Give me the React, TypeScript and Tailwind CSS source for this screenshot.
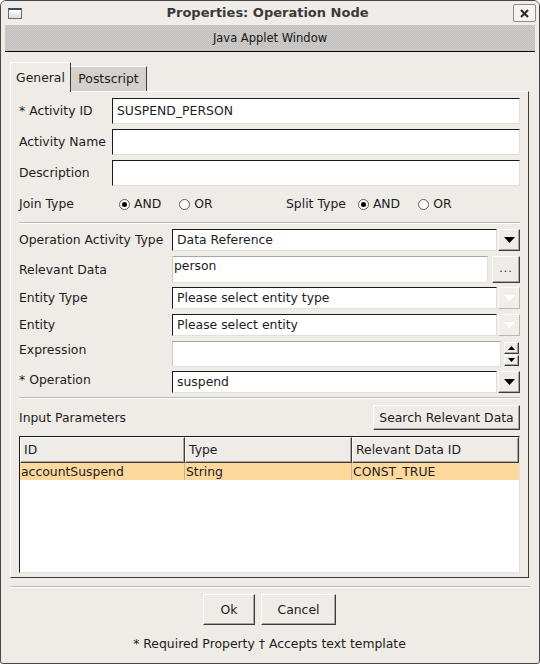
import React from 'react';

const bevel =
  'border border-t-white border-l-white border-r-[#3c3c3c] border-b-[#3c3c3c] shadow-[inset_-1px_-1px_0_#aaa6a1] bg-[#efebe7]';
const bevelOff =
  'border border-t-white border-l-white border-r-[#b9b5b0] border-b-[#b9b5b0] bg-[#f1eeea]';
const sunken =
  'border border-t-[#1a1a1a] border-l-[#1a1a1a] border-r-[#e2ded9] border-b-[#e2ded9] bg-white';
const soft =
  'border border-t-[#a9a5a0] border-l-[#cfcbc6] border-r-[#e2ded9] border-b-[#e2ded9] bg-white';

function DownArrow({ off }: { off?: boolean }) {
  return (
    <svg width="11" height="6" viewBox="0 0 11 6" aria-hidden>
      <polygon points="0,0 11,0 5.5,6" fill={off ? '#ffffff' : '#000000'} />
    </svg>
  );
}

function Label({ children, w }: { children: React.ReactNode; w: string }) {
  return <span className={`${w} shrink-0 whitespace-nowrap`}>{children}</span>;
}

function Combo({ value, off }: { value: string; off?: boolean }) {
  return (
    <div className="flex h-[22px] flex-1 gap-px">
      <div className={`${sunken} flex flex-1 items-center px-[4px]`}>{value}</div>
      <div className={`${off ? bevelOff : bevel} flex w-[22px] items-center justify-center`}>
        <DownArrow off={off} />
      </div>
    </div>
  );
}

function Radio({ on, label }: { on?: boolean; label: string }) {
  return (
    <span className="flex items-center gap-[4px]">
      <span className="flex size-[11px] items-center justify-center rounded-full border border-[#5e5e5e] bg-white">
        {on && <span className="size-[5px] rounded-full bg-black" />}
      </span>
      <span>{label}</span>
    </span>
  );
}

function Groove() {
  return <div className="h-[2px] border-t border-t-[#bdb9b4] border-b border-b-white" />;
}

function Spinner() {
  return (
    <div className="flex w-[15px] flex-col gap-px py-px">
      <div className={`${bevel} flex h-[12px] items-center justify-center`}>
        <svg width="7" height="4" viewBox="0 0 7 4" aria-hidden>
          <polygon points="0,4 7,4 3.5,0" fill="#000" />
        </svg>
      </div>
      <div className={`${bevel} flex h-[12px] items-center justify-center`}>
        <svg width="7" height="4" viewBox="0 0 7 4" aria-hidden>
          <polygon points="0,0 7,0 3.5,4" fill="#000" />
        </svg>
      </div>
    </div>
  );
}

export default function App() {
  return (
    <div className="flex h-[664px] w-[540px] flex-col overflow-hidden rounded-t-[6px] rounded-b-[3px] border border-[#474747] bg-[#efebe7] font-['DejaVu_Sans',sans-serif] text-[12.4px] leading-[16px] text-[#1c1c1c]">
      {/* title bar */}
      <div className="flex h-[24px] shrink-0 items-center bg-[#f0ede9] pl-[7px] pr-[3px]">
        <span className="h-[11px] w-[14px] border border-[#6a6a6a] border-t-2 border-t-[#3c4b66] bg-gradient-to-b from-white to-[#d9dde2]" />
        <span className="flex-1 text-center text-[13px] font-bold text-[#3a3a3a]">
          Properties: Operation Node
        </span>
        <span className="flex h-[18px] w-[23px] items-center justify-center rounded-[2px] border border-[#8c8c8c] bg-[#f6f4f1]">
          <svg width="9" height="9" viewBox="0 0 9 9" aria-hidden>
            <path d="M1 1 L8 8 M8 1 L1 8" stroke="#2e2e2e" strokeWidth="2.2" />
          </svg>
        </span>
      </div>

      {/* applet banner */}
      <div className="mx-[4px] flex h-[27px] shrink-0 items-center justify-center border-b border-black bg-[#c8c6c4] bg-[repeating-conic-gradient(#c1bfbd_0%_25%,#cfcdcb_0%_50%)] bg-[length:2px_2px] text-[11.5px] text-[#151515]">
        Java Applet Window
      </div>

      <div className="flex flex-1 flex-col pl-[9px] pr-[10px] pt-[10px]">
        {/* tabs */}
        <div className="flex h-[29px] items-end">
          <div className="relative z-10 -mb-px flex h-[30px] w-[61px] items-center justify-center border-l border-t border-l-white border-t-white border-r border-r-[#3c3c3c] bg-[#efebe7]">
            General
          </div>
          <div className="flex h-[25px] w-[76px] items-center justify-center border-t border-t-white border-r border-r-[#3c3c3c] bg-[#d4d0cb]">
            Postscript
          </div>
        </div>

        {/* panel */}
        <div className="flex h-[487px] flex-col border border-t-white border-l-white border-r-[#3c3c3c] border-b-[#3c3c3c] px-[8px] pt-[6px]">
          <div className="flex h-[26px] items-center">
            <Label w="w-[93px]">* Activity ID</Label>
            <div className={`${sunken} flex h-full flex-1 items-center px-[4px]`}>SUSPEND_PERSON</div>
          </div>
          <div className="mt-[5px] flex h-[26px] items-center">
            <Label w="w-[93px]">Activity Name</Label>
            <div className={`${sunken} h-full flex-1`} />
          </div>
          <div className="mt-[5px] flex h-[26px] items-center">
            <Label w="w-[93px]">Description</Label>
            <div className={`${sunken} h-full flex-1`} />
          </div>

          <div className="mt-[6px] flex h-[24px] items-center">
            <Label w="w-[100px]">Join Type</Label>
            <div className="flex w-[167px] gap-[18px]">
              <Radio on label="AND" />
              <Radio label="OR" />
            </div>
            <span className="mr-[12px]">Split Type</span>
            <div className="flex gap-[18px]">
              <Radio on label="AND" />
              <Radio label="OR" />
            </div>
          </div>

          <div className="mt-[6px]">
            <Groove />
          </div>

          <div className="mt-[5px] flex items-center">
            <Label w="w-[153px]">Operation Activity Type</Label>
            <Combo value="Data Reference" />
          </div>
          <div className="mt-[5px] flex h-[27px] items-center">
            <Label w="w-[153px]">Relevant Data</Label>
            <div className={`${soft} h-full flex-1 px-[1px] pt-px`}>person</div>
            <div className={`${bevel} ml-[4px] flex h-[27px] w-[28px] items-center justify-center pb-[1px] text-[11px] tracking-[1px]`}>
              ...
            </div>
          </div>
          <div className="mt-[4px] flex items-center">
            <Label w="w-[153px]">Entity Type</Label>
            <Combo value="Please select entity type" off />
          </div>
          <div className="mt-[5px] flex items-center">
            <Label w="w-[153px]">Entity</Label>
            <Combo value="Please select entity" off />
          </div>
          <div className="mt-[5px] flex h-[26px] items-start">
            <Label w="w-[153px] pt-px">Expression</Label>
            <div className={`${soft} h-full flex-1`} />
            <div className="ml-[3px] mr-px flex h-full">
              <Spinner />
            </div>
          </div>
          <div className="mt-[4px] flex items-center">
            <Label w="w-[153px] -mt-[5px]">* Operation</Label>
            <Combo value="suspend" />
          </div>

          <div className="mt-[4px]">
            <Groove />
          </div>

          <div className="mt-[6px] flex h-[25px] items-center justify-between">
            <span>Input Parameters</span>
            <div className={`${bevel} flex h-full w-[147px] items-center justify-center`}>
              Search Relevant Data
            </div>
          </div>

          {/* table */}
          <div className={`${sunken} mt-[6px] flex h-[137px] flex-col`}>
            <div className="flex h-[26px]">
              <div className={`${bevel} flex w-[165px] items-center px-[3px]`}>ID</div>
              <div className={`${bevel} flex w-[167px] items-center px-[3px]`}>Type</div>
              <div className={`${bevel} flex flex-1 items-center px-[3px]`}>Relevant Data ID</div>
            </div>
            <div className="flex h-[17px] bg-[#fcd89c]">
              <div className="flex w-[165px] items-center border-r border-[#c9b48e] px-px">accountSuspend</div>
              <div className="flex w-[167px] items-center border-r border-[#c9b48e] px-px">String</div>
              <div className="flex flex-1 items-center px-px">CONST_TRUE</div>
            </div>
          </div>
        </div>

        <div className="mt-[8px] mr-[-1px]">
          <Groove />
        </div>

        <div className="mt-[6px] flex justify-center gap-[6px]">
          <div className={`${bevel} flex h-[31px] w-[52px] items-center justify-center`}>Ok</div>
          <div className={`${bevel} flex h-[31px] w-[75px] items-center justify-center`}>Cancel</div>
        </div>

        <div className="mt-[11px] text-center">* Required Property † Accepts text template</div>
      </div>
    </div>
  );
}
